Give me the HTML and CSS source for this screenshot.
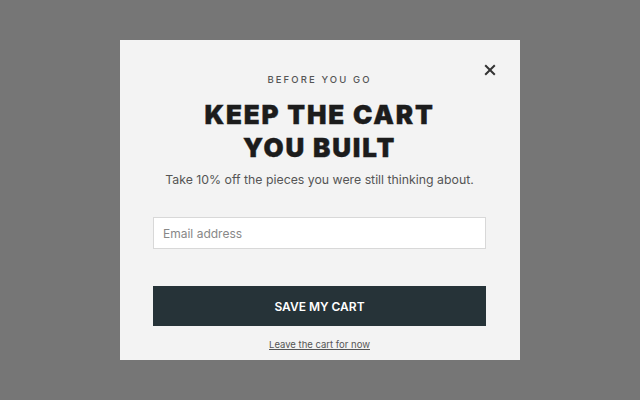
FILE: index.html
```html
<!DOCTYPE html>
<html lang="en">
<head>
<meta charset="utf-8">
<title>Before you go</title>
<link rel="stylesheet" href="styles.css">
</head>
<body>
<div class="overlay">
  <div class="modal">
    <button class="close" aria-label="Close">
      <svg width="12" height="12" viewBox="0 0 12 12"><path d="M1.2 1.2L10.8 10.8M10.8 1.2L1.2 10.8" stroke="#333" stroke-width="2" fill="none"/></svg>
    </button>
    <p class="eyebrow">BEFORE YOU GO</p>
    <h1 class="title">KEEP THE CART<br>YOU BUILT</h1>
    <p class="sub">Take 10% off the pieces you were still thinking about.</p>
    <input class="email" type="email" placeholder="Email address">
    <button class="cta">SAVE MY CART</button>
    <a class="leave" href="#">Leave the cart for now</a>
  </div>
</div>
</body>
</html>
```
FILE: styles.css
```css
* { box-sizing: border-box; }
html, body { margin: 0; padding: 0; }
body {
  background: #767676;
  font-family: Inter, "Noto Sans", sans-serif;
}
.overlay {
  height: 100vh;
  display: flex;
  align-items: center;
  justify-content: center;
}
.modal {
  position: relative;
  width: 400px;
  height: 320px;
  background: #f3f3f3;
  padding: 33px 34px 0 33px;
  display: flex;
  flex-direction: column;
  align-items: stretch;
  text-align: center;
}
.close {
  position: absolute;
  top: 24px;
  right: 24px;
  width: 12px;
  height: 12px;
  padding: 0;
  border: 0;
  background: none;
  display: flex;
}
.eyebrow {
  margin: 0;
  font-size: 9.5px;
  line-height: 14px;
  letter-spacing: 2.1px;
  color: #555;
  font-weight: 500;
}
.title {
  margin: 11px 0 0;
  font-size: 26px;
  line-height: 33px;
  font-weight: 900;
  color: #1c1c1c;
  letter-spacing: 1.8px;
  -webkit-text-stroke: 0.4px #1c1c1c;
}
.sub {
  margin: 7px 0 0;
  font-size: 12.3px;
  line-height: 18px;
  color: #555;
}
.email {
  margin-top: 28px;
  height: 32px;
  width: 100%;
  border: 1px solid #d8d8d8;
  background: #fff;
  padding: 0 9px;
  font: 12px Inter, sans-serif;
  color: #333;
}
.email::placeholder { color: #888; }
.cta {
  margin-top: 37px;
  height: 40px;
  width: 100%;
  border: 0;
  background: #263338;
  color: #fff;
  font: 600 12px Inter, sans-serif;
}
.leave {
  margin-top: 12px;
  font-size: 9.5px;
  line-height: 14px;
  color: #555;
  text-decoration: underline;
  align-self: center;
}
```
